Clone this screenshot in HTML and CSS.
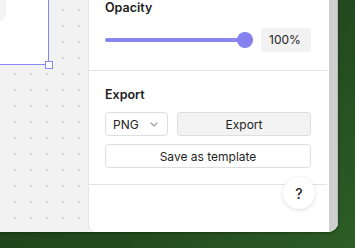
FILE: index.html
```html
<!DOCTYPE html>
<html lang="en">
<head>
    <meta charset="UTF-8">
    <meta name="viewport" content="width=device-width, initial-scale=1.0">
    <title>Properties panel</title>
    <link rel="stylesheet" href="styles.css">
</head>
<body>
    <div class="app-window">
        <div class="canvas">
            <div class="shape selected">
                <div class="shape-inner"></div>
                <span class="handle"></span>
            </div>
        </div>
        <div class="panel">
            <div class="panel-body">
                <div class="section section-opacity">
                    <div class="section-title">Opacity</div>
                    <div class="slider-row">
                        <div class="slider">
                            <div class="slider-track"></div>
                            <div class="slider-thumb"></div>
                        </div>
                        <div class="value-box">100%</div>
                    </div>
                </div>
                <div class="section section-export">
                    <div class="section-title">Export</div>
                    <div class="export-row">
                        <div class="select">
                            <span>PNG</span>
                            <svg class="chevron" width="8" height="5" viewBox="0 0 8 5"><path d="M1 1l3 3 3-3" fill="none" stroke="#9a9a9a" stroke-width="1.1" stroke-linecap="round" stroke-linejoin="round"/></svg>
                        </div>
                        <button class="btn btn-gray">Export</button>
                    </div>
                    <button class="btn btn-white btn-block">Save as template</button>
                </div>
                <div class="section section-empty"></div>
                <button class="help-btn" title="Help">?</button>
            </div>
            <div class="scrollbar"></div>
        </div>
    </div>
</body>
</html>
```

FILE: styles.css
```css
body { margin: 0; width: 355px; height: 248px; overflow: hidden; font-family: Inter, "Liberation Sans", sans-serif; color: #1f1f1f; background: linear-gradient(135deg, #1d3d19 0%, #234a1e 60%, #2d5d27 100%); }
.app-window { width: 338px; height: 232px; display: flex; border-bottom-right-radius: 10px; overflow: hidden; box-shadow: 0 1px 3px rgba(0, 0, 0, 0.35); background-color: #f2f2f2; }

.canvas {
    position: relative;
    width: 88px;
    flex-shrink: 0;
    background-color: #f2f2f2;
    background-image: radial-gradient(circle, #d2d2d2 1px, transparent 1.3px);
    background-size: 16px 16px;
    background-position: 7px 2px;
}
.shape { position: absolute; left: -12px; top: -12px; width: 61px; height: 77px; background: #fff; border: 1.5px solid #8a86ef; box-sizing: border-box; }
.shape-inner { position: absolute; left: -4px; top: -4px; width: 21px; height: 36px; background: #f4f4f4; border-radius: 0 0 6px 0; }
.handle { position: absolute; right: -5px; bottom: -5px; width: 6px; height: 6px; background: #fff; border: 1.5px solid #8a86ef; }

.panel { display: flex; flex: 1; background: #fff; border-left: 1px solid #e4e4e4; border-bottom-left-radius: 8px; }
.panel-body { position: relative; width: 238px; }
.scrollbar { width: 8px; margin-left: 2px; background: #cecece; border-right: 1px solid #bdbdbd; }

.section { padding: 0 16px; }
.section + .section { border-top: 1px solid #e3e3e3; }
.section-title { font-size: 12.5px; font-weight: 600; line-height: 16px; color: #1c1c1c; }
.section-opacity { padding-bottom: 18px; }
.section-export { padding-top: 15px; padding-bottom: 16px; }
.section-export .section-title { line-height: 17px; margin-bottom: 9px; }

.slider-row { display: flex; align-items: center; gap: 8px; margin-top: 12px; }
.slider { position: relative; flex: 1; height: 24px; display: flex; align-items: center; }
.slider-track { width: 100%; height: 4px; border-radius: 2px; background: #8a86ef; }
.slider-thumb { position: absolute; right: 0; top: 4px; width: 16px; height: 16px; border-radius: 50%; background: #8581ee; }
.value-box { width: 50px; height: 24px; box-sizing: border-box; padding-left: 8px; line-height: 24px; font-size: 12px; background: #f2f2f2; border-radius: 4px; color: #222; }

.export-row { display: flex; gap: 9px; margin-bottom: 8px; }
.select { width: 63px; height: 24px; box-sizing: border-box; display: flex; align-items: center; justify-content: space-between; padding: 0 9px 0 7px; border: 1px solid #dedede; border-radius: 4px; font-size: 12px; color: #222; }
.chevron { display: block; margin-top: 1px; }
.btn { height: 24px; box-sizing: border-box; border: 1px solid #dedede; border-radius: 4px; font-family: inherit; font-size: 12px; color: #1f1f1f; padding: 0; cursor: pointer; }
.btn-gray { flex: 1; background: #f3f3f3; }
.btn-white { background: #fff; }
.btn-block { display: block; width: 100%; }

.section-empty { height: 48px; }
.help-btn { position: absolute; left: 194px; top: 177px; width: 32px; height: 32px; border-radius: 50%; border: none; background: #fff; box-shadow: 0 1px 4px rgba(0, 0, 0, 0.14); font-family: inherit; font-size: 14px; font-weight: 500; color: #222; padding: 0; cursor: pointer; }
```
